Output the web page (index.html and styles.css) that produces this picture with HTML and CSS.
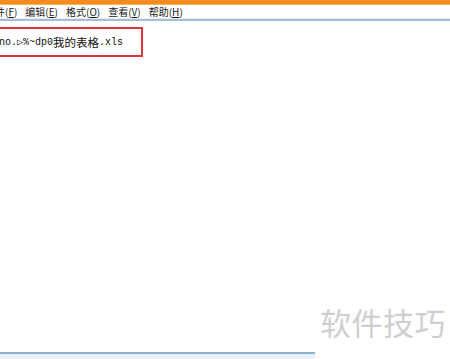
FILE: index.html
```html
<html>
<head>
  <title>记事本 - 批处理</title>
  <meta charset="UTF-8">
  <link rel="stylesheet" href="styles.css">
</head>
<body>
  <div class="window">
    <div class="titlebar"></div>
    <div class="menubar">
      <span class="menu first">文件(<u>F</u>)</span>
      <span class="menu">编辑(<u>E</u>)</span>
      <span class="menu">格式(<u>O</u>)</span>
      <span class="menu">查看(<u>V</u>)</span>
      <span class="menu">帮助(<u>H</u>)</span>
    </div>
    <div class="editor">
      <div class="mark">
        <span class="code">no.▷%~dp0</span><span class="cjk">我的表格</span><span class="code">.xls</span>
      </div>
    </div>
    <div class="status"></div>
    <div class="watermark">软件技巧</div>
  </div>
</body>
</html>
```

FILE: styles.css
```css
body {
  margin: 0;
  background: #fff;
  overflow: hidden;
}
.window {
  position: relative;
  height: 359px;
  display: flex;
  flex-direction: column;
  font-family: "Noto Sans CJK SC", sans-serif;
}
.titlebar {
  height: 5px;
  background: linear-gradient(#f68b1f 0, #f68b1f 4px, #fcd9ae 5px);
}
.menubar {
  height: 12px;
  padding-top: 1px;
  display: flex;
  gap: 8px;
  font-size: 10px;
  line-height: 12px;
  color: #1a1a1a;
  white-space: nowrap;
  border-bottom: 1px solid #e3eef8;
}
.menubar u {
  text-decoration: underline;
  text-underline-offset: 1px;
}
.menu.first {
  margin-left: -15px;
}
.editor {
  flex: 1;
  border-top: 2px solid #a8bdd0;
  padding-top: 6px;
}
.mark {
  width: 142px;
  height: 26px;
  margin-left: -10px;
  border: 2px solid #d8383a;
  display: flex;
  align-items: center;
  padding-left: 7px;
  box-sizing: content-box;
  color: #111;
  white-space: nowrap;
}
.code {
  font-family: "Liberation Mono", monospace;
  font-size: 10px;
}
.cjk {
  font-family: "Noto Sans CJK SC", sans-serif;
  font-size: 11.5px;
}
.status {
  width: 315px;
  height: 5px;
  border-top: 2px solid #8fb0cd;
  background: #e9f1f9;
}
.watermark {
  position: absolute;
  left: 320px;
  top: 306px;
  font-size: 31px;
  line-height: 31px;
  color: #cfcfcf;
  letter-spacing: 0.5px;
}
```
